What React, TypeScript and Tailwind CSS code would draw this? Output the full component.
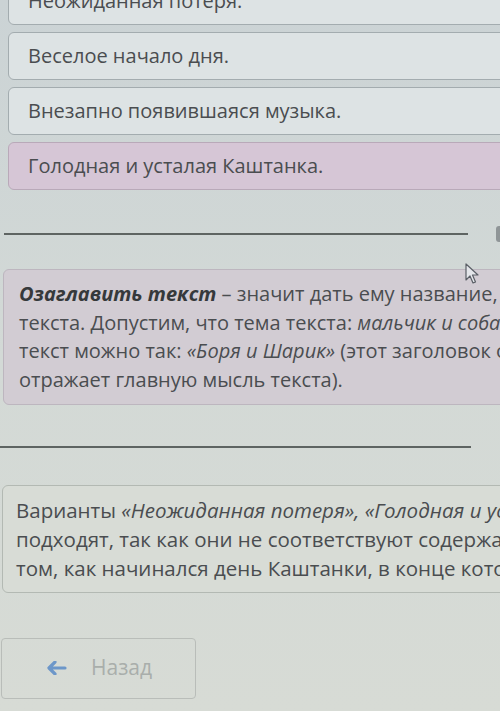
import React from "react";

const font = { fontFamily: '"Open Sans", "Noto Sans", sans-serif' };

const options = [
  { label: "Неожиданная потеря.", picked: false },
  { label: "Веселое начало дня.", picked: false },
  { label: "Внезапно появившаяся музыка.", picked: false },
  { label: "Голодная и усталая Каштанка.", picked: true },
];

const Cursor = () => (
  <svg
    className="absolute left-[465px] top-[263px]"
    width="16"
    height="22"
    viewBox="0 0 16 22"
  >
    <path
      d="M1 1 L1 17 L5 13 L8 20 L10.5 19 L7.5 12 L13 12 Z"
      fill="#e4e6ea"
      stroke="#5a5f66"
      strokeWidth="1.2"
      strokeLinejoin="round"
    />
  </svg>
);

export default function App() {
  return (
    <div
      className="relative w-[500px] h-[711px] overflow-hidden bg-gradient-to-b from-[#cbd3d5] via-[#d3d9d6] to-[#d7dbd5] text-[#4a4d50]"
      style={font}
    >
      <div className="w-[620px]">
        {/* answer options */}
        <div className="flex flex-col gap-[7px] pl-[8px] -mt-[23px]">
          {options.map((o) => (
            <div
              key={o.label}
              className={`h-[48px] flex items-center pl-[19px] rounded-[6px] border text-[20px] ${
                o.picked
                  ? "bg-[#d6c6d6] border-[#b9a9b9]"
                  : "bg-[#dde3e4] border-[#a3acaf]"
              }`}
            >
              {o.label}
            </div>
          ))}
        </div>

        {/* divider */}
        <div className="flex items-center mt-[36px] pl-[4px]">
          <div className="w-[464px] h-[1.5px] bg-[#5e6462]" />
          <div className="ml-[28px] w-[6px] h-[16px] rounded-sm bg-[#8f9597]" />
        </div>

        {/* rule box */}
        <div className="mt-[27px] ml-[3px] rounded-[6px] border border-[#bdb6bf] bg-[#d2ccd3] pl-[15px] py-[10px] text-[20px] leading-[28.5px] whitespace-nowrap">
          <div>
            <b className="italic text-[#36393b]">Озаглавить текст</b> – значит дать
            ему название, отражающее тему
          </div>
          <div>
            текста. Допустим, что тема текста: <i>мальчик и собака</i>. Тогда
          </div>
          <div>
            текст можно так: <i>«Боря и Шарик»</i> (этот заголовок отражает тему)
          </div>
          <div>отражает главную мысль текста).</div>
        </div>

        {/* divider */}
        <div className="mt-[41px] w-[471px] h-[1.5px] bg-[#5e6462]" />

        {/* explanation box */}
        <div className="mt-[37px] ml-[2px] h-[108px] rounded-[6px] border border-[#b3b9b3] bg-[#d8dcd6] pl-[13px] pt-[10px] text-[20.5px] leading-[29px] whitespace-nowrap">
          <div>
            Варианты <i>«Неожиданная потеря», «Голодная и усталая Каштанка»</i> не
          </div>
          <div>подходят, так как они не соответствуют содержанию текста.</div>
          <div>том, как начинался день Каштанки, в конце которого</div>
        </div>

        {/* back button */}
        <div className="mt-[45px] ml-[1px] w-[195px] h-[61px] rounded-[4px] border border-[#b9bdb9] flex items-center pl-[45px] gap-[24px]">
          <svg width="20" height="14" viewBox="0 0 20 14">
            <path
              d="M8 1 L2 7 L8 13 M2.5 7 L18 7"
              fill="none"
              stroke="#6d97c9"
              strokeWidth="3.2"
              strokeLinecap="round"
              strokeLinejoin="round"
            />
          </svg>
          <span className="text-[21px] text-[#a9aeab]">Назад</span>
        </div>
      </div>
      <Cursor />
    </div>
  );
}
